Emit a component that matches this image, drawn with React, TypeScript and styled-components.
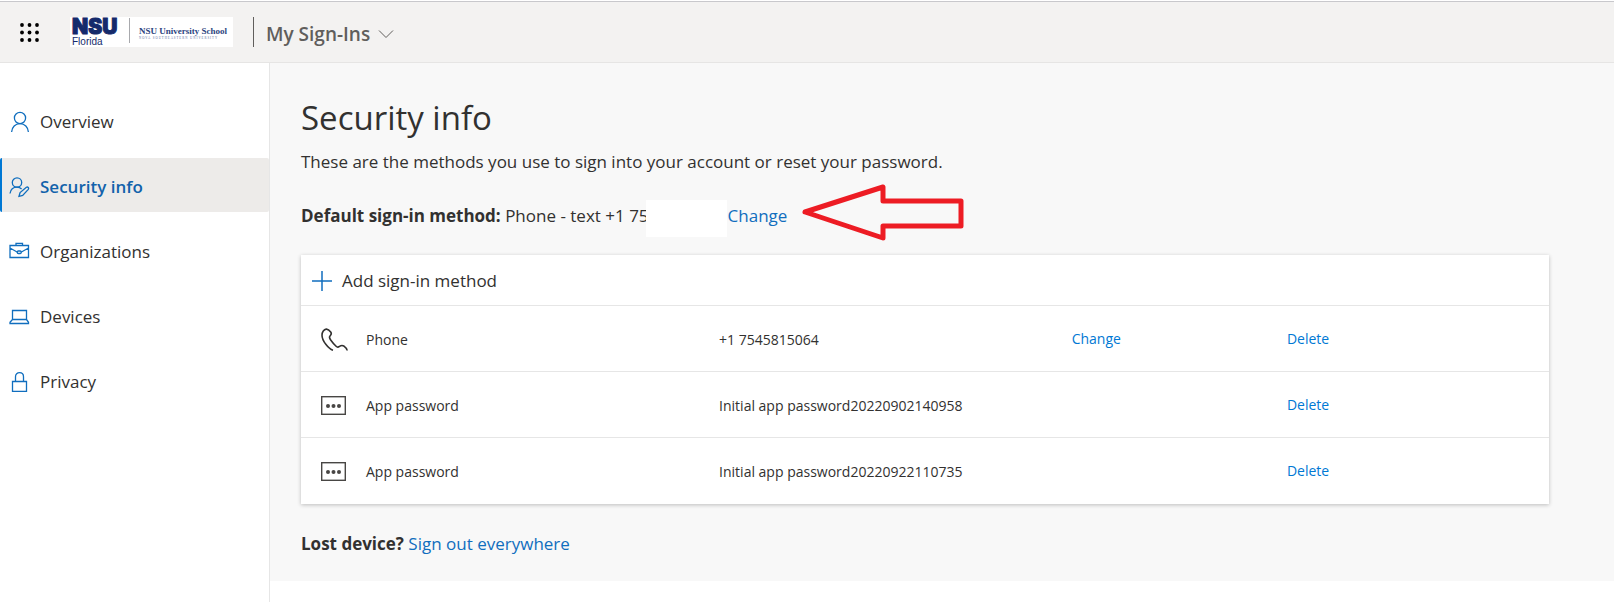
import React from "react";
import styled, { createGlobalStyle } from "styled-components";

const GlobalStyle = createGlobalStyle`
  *, *::before, *::after { box-sizing: border-box; }
  body {
    margin: 0;
    background: #ffffff;
    color: #323130;
    font-family: "Open Sans", "Noto Sans", sans-serif;
    font-size: 17px;
    line-height: 24px;
  }
  h1, p { margin: 0; }
  a { text-decoration: none; }
  button { font: inherit; color: inherit; border: 0; background: none; padding: 0; cursor: pointer; }
  svg { display: block; flex: none; overflow: visible; }
`;

const Header = styled.header`
  display: flex;
  align-items: center;
  height: 62px;
  margin-top: 1px;
  padding-left: 19px;
  background: #f3f2f1;
  border-top: 1px solid #c8c8cc;
  border-bottom: 1px solid #e6e5e4;
`;

const LauncherButton = styled.button`
  display: flex;
`;

const LogoLink = styled.a`
  margin-left: 31px;
`;

const AppMenuButton = styled.button`
  display: flex;
  align-items: center;
  gap: 8px;
  height: 30px;
  margin-left: 20px;
  padding: 4px 0 0 12px;
  border-left: 1px solid #605e5c;
  color: #605e5c;
  font-size: 19px;
  font-weight: 600;
`;

const Body = styled.div`
  display: flex;
  align-items: flex-start;
`;

const Sidebar = styled.nav`
  flex: none;
  align-self: stretch;
  display: flex;
  flex-direction: column;
  gap: 11px;
  width: 270px;
  min-height: calc(100vh - 63px);
  padding-top: 30px;
  border-right: 1px solid #e6e6e6;
`;

const NavLink = styled.a<{ $active?: boolean }>`
  display: flex;
  align-items: center;
  gap: 11px;
  height: 54px;
  padding: 3px 0 0 7px;
  border-left: 2px solid ${(p) => (p.$active ? "#0078d4" : "transparent")};
  border-radius: 2px;
  background: ${(p) => (p.$active ? "#edebe9" : "transparent")};
  color: ${(p) => (p.$active ? "#1262ab" : "#323130")};
  font-weight: ${(p) => (p.$active ? 600 : 400)};
`;

const Main = styled.main`
  flex: 1;
  min-width: 0;
  padding: 31px 65px 25px 31px;
  background: #f8f8f8;
`;

const Title = styled.h1`
  font-size: 33px;
  font-weight: 400;
  line-height: 48px;
`;

const Intro = styled.p`
  margin-top: 8px;
`;

const DefaultMethod = styled.div`
  position: relative;
  display: flex;
  align-items: flex-start;
  height: 37px;
  margin: 26px 0 18px;
  line-height: 32px;
  white-space: pre;
`;

const Strong = styled.strong`
  font-weight: 700;
`;

const Redaction = styled.span`
  width: 81px;
  height: 37px;
  margin: 0 1px 0 -3px;
  background: #ffffff;
`;

const TextLink = styled.a`
  color: #106ebe;
`;

const Pointer = styled.svg`
  position: absolute;
  left: 500px;
  bottom: -2px;
`;

const Card = styled.section`
  background: #ffffff;
  box-shadow: 0 1px 4px rgba(0, 0, 0, 0.24);
`;

const AddButton = styled.button`
  display: flex;
  align-items: center;
  gap: 10px;
  width: 100%;
  height: 50px;
  padding: 2px 0 0 11px;
`;

const MethodTable = styled.table`
  width: 100%;
  table-layout: fixed;
  border-collapse: collapse;
  font-size: 14px;
`;

const Column = styled.col<{ $width: string }>`
  width: ${(p) => p.$width};
`;

const MethodRow = styled.tr`
  height: 66px;
  border-top: 1px solid #e6e6e6;
`;

const Cell = styled.td`
  padding: 2px 0 0;
`;

const ActionCell = styled.td`
  padding: 0;
`;

const MethodKind = styled.div`
  display: flex;
  align-items: center;
  gap: 18px;
  padding-left: 20px;
`;

const RowAction = styled.button`
  color: #0078d4;
`;

const LostDevice = styled.p`
  margin-top: 28px;
`;

const iconProps = {
  width: 20,
  height: 20,
  viewBox: "0 0 20 20",
  fill: "none",
  stroke: "#106ebe",
  strokeWidth: 1.3,
  "aria-hidden": true,
};

const PersonIcon = () => (
  <svg {...iconProps}>
    <circle cx="11" cy="6" r="5.6" />
    <path d="M2.6 20c.3-5 3.700-8.400 8.400-8.400s8.100 3.400 8.400 8.400" />
  </svg>
);

const PersonEditIcon = () => (
  <svg {...iconProps}>
    <circle cx="8" cy="5.500" r="4.700" />
    <path d="M1 16.500c.6-3.800 3.300-6.300 7-6.300 1.900 0 3.400.6 4.600 1.700" />
    <path d="M10 19.300l1.100-3.700 6.300-5.300c1.400-.9 2.900.8 1.900 2.100l-5.600 6.100z" />
  </svg>
);

const BriefcaseIcon = () => (
  <svg {...iconProps}>
    <path d="M1 3.500h18.500v12H1zM7 3.500V1.300h6.500v2.200M1 6l7.500 4.200M12 10.200L19.500 6" />
    <rect x="8.300" y="9" width="3.900" height="2.500" rx="1" />
  </svg>
);

const LaptopIcon = () => (
  <svg {...iconProps}>
    <path d="M3.500 3.500h14v9h-14zM3.500 12.500L1 15.300v1.200h18.500v-1.200l-2-2.800" />
  </svg>
);

const LockIcon = () => (
  <svg {...iconProps}>
    <path d="M3.500 9.500h14V19.400h-14zM6.500 9.500V4.700C6.500 2 8.300.7 10.500.7s4 1.300 4 4v4.800" />
  </svg>
);

const LauncherIcon = () => (
  <svg width="20" height="20" viewBox="0 0 20 20" aria-hidden="true">
    {[3, 10.500, 18].flatMap((y) =>
      [3, 10.500, 18].map((x) => <circle key={`${x}-${y}`} cx={x} cy={y} r="1.900" fill="#000" />)
    )}
  </svg>
);

const Logo = () => (
  <svg width="163" height="30" viewBox="0 0 163 30" role="img" aria-label="NSU Florida, NSU University School">
    <rect width="163" height="30" fill="#fff" />
    <text x="2" y="17" fill="#152a6b" stroke="#152a6b" strokeWidth="1" fontFamily="Inter, sans-serif" fontWeight="900" fontSize="21">NSU</text>
    <text x="2" y="28" fill="#152a6b" fontFamily="Liberation Sans, sans-serif" fontSize="10">Florida</text>
    <path d="M59.500 1v25" stroke="#a8a9ad" />
    <text x="69" y="17" fill="#2c4480" fontFamily="Liberation Serif, serif" fontWeight="700" fontSize="9">NSU University School</text>
    <text x="69" y="22" fill="#5b6da0" fontFamily="Liberation Serif, serif" fontSize="3" letterSpacing="1">NOVA SOUTHEASTERN UNIVERSITY</text>
  </svg>
);

const ChevronIcon = () => (
  <svg width="16" height="10" viewBox="0 0 16 10" fill="none" stroke="#605e5c" aria-hidden="true">
    <path d="M1 1.500l7 7 7-7" />
  </svg>
);

const PlusIcon = () => (
  <svg width="20" height="20" viewBox="0 0 20 20" stroke="#106ebe" aria-hidden="true">
    <path d="M10 0v20M0 10h20" strokeWidth="1.500" />
  </svg>
);

const PhoneIcon = () => (
  <svg width="27" height="24" viewBox="0 0 27 24" fill="none" stroke="#323130" strokeWidth="1.600" aria-hidden="true">
    <path d="M12 22.200C7.500 21 1 12.800 1 7.200 1 4 3 1.300 5.200 1.100c1.800-.2 3.500 1.500 4.700 3.200.9 1.400.2 2.600-.9 3.700-.9 1-.6 2.200.5 3.700 1.700 2.400 3.700 4.700 5.600 6.600 1.400 1.400 2.200 1 3.400.1 1.400-1 2.500-1.600 4.200-.4 1.500 1.100 3.200 2.200 3.500 4.500" />
  </svg>
);

const PasswordIcon = () => (
  <svg width="27" height="20" viewBox="0 0 27 20" aria-hidden="true">
    <rect x=".7" y=".7" width="23.600" height="17.600" fill="none" stroke="#484644" strokeWidth="1.400" />
    {[7, 12.500, 18].map((x) => <circle key={x} cx={x} cy="10" r="2" fill="#484644" />)}
  </svg>
);

const navItems = [
  { label: "Overview", Icon: PersonIcon },
  { label: "Security info", Icon: PersonEditIcon, active: true },
  { label: "Organizations", Icon: BriefcaseIcon },
  { label: "Devices", Icon: LaptopIcon },
  { label: "Privacy", Icon: LockIcon },
];

const methods = [
  { kind: "Phone", Icon: PhoneIcon, detail: "+1 7545815064", editable: true },
  { kind: "App password", Icon: PasswordIcon, detail: "Initial app password20220902140958" },
  { kind: "App password", Icon: PasswordIcon, detail: "Initial app password20220922110735" },
];

export default function App() {
  return (
    <>
      <GlobalStyle />
      <Header>
        <LauncherButton type="button" aria-label="App launcher"><LauncherIcon /></LauncherButton>
        <LogoLink href="#home"><Logo /></LogoLink>
        <AppMenuButton type="button">My Sign-Ins<ChevronIcon /></AppMenuButton>
      </Header>
      <Body>
        <Sidebar aria-label="Account">
          {navItems.map(({ label, Icon, active }) => (
            <NavLink key={label} href="#nav" $active={active} aria-current={active ? "page" : undefined}>
              <Icon />
              {label}
            </NavLink>
          ))}
        </Sidebar>
        <Main>
          <Title>Security info</Title>
          <Intro>These are the methods you use to sign into your account or reset your password.</Intro>
          <DefaultMethod>
            <Strong>Default sign-in method: </Strong>
            <span>Phone - text +1 75</span>
            <Redaction />
            <TextLink href="#change">Change</TextLink>
            <Pointer width="164" height="56" viewBox="0 0 164 56" fill="none" stroke="#ed1c24" strokeWidth="5" strokeLinejoin="round" aria-hidden="true">
              <path d="M4 29L82 4v14h78v25H82v12z" />
            </Pointer>
          </DefaultMethod>
          <Card>
            <AddButton type="button"><PlusIcon />Add sign-in method</AddButton>
            <MethodTable aria-label="Sign-in methods">
              <colgroup>
                <Column $width="33.5%" />
                <Column $width="28.25%" />
                <Column $width="17.25%" />
                <Column $width="21%" />
              </colgroup>
              <tbody>
                {methods.map(({ kind, Icon, detail, editable }) => (
                  <MethodRow key={detail}>
                    <Cell><MethodKind><Icon />{kind}</MethodKind></Cell>
                    <Cell>{detail}</Cell>
                    <ActionCell>{editable && <RowAction type="button">Change</RowAction>}</ActionCell>
                    <ActionCell><RowAction type="button">Delete</RowAction></ActionCell>
                  </MethodRow>
                ))}
              </tbody>
            </MethodTable>
          </Card>
          <LostDevice>
            <Strong>Lost device?</Strong> <TextLink href="#signout">Sign out everywhere</TextLink>
          </LostDevice>
        </Main>
      </Body>
    </>
  );
}
